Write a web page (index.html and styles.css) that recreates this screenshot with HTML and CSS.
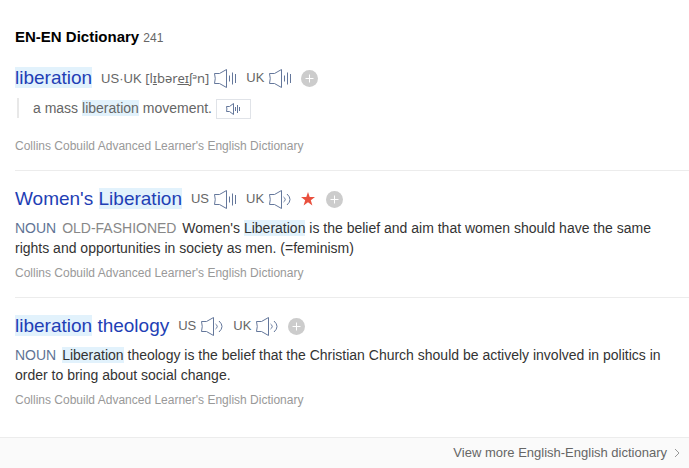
FILE: index.html
```html
<!DOCTYPE html>
<html lang="en">
<head>
<meta charset="utf-8">
<title>EN-EN Dictionary</title>
<link rel="stylesheet" href="styles.css">
</head>
<body>
<svg class="sprite" aria-hidden="true">
  <symbol id="speaker-bars" viewBox="0 0 24 22">
    <path d="M5.500 6.500h-5q1.500 5 0 10h5l7 4v-18z"/>
    <path d="M15.500 8.500v6M18.500 5.500v12M21.500 7v9"/>
  </symbol>
  <symbol id="speaker-waves" viewBox="0 0 24 22">
    <path d="M5.500 6.500h-5q1.500 5 0 10h5l7 4v-18z"/>
    <path d="M14.500 9q3.500 2.500 0 5M18 6q6 5.500 0 11"/>
  </symbol>
  <symbol id="speaker-small" viewBox="0 0 16 14">
    <path d="M4.500 4.500h-3q.8 2.500 0 5h3l4 3v-11z"/>
    <path d="M10.500 5v4M12.500 3v8M14.500 5v4"/>
  </symbol>
  <symbol id="plus" viewBox="0 0 17 17">
    <circle cx="8.500" cy="8.500" r="8.500"/>
    <path d="M8.500 4.500v8M4.500 8.500h8"/>
  </symbol>
</svg>
<main>
  <h1 class="heading">EN-EN Dictionary <span class="count">241</span></h1>

  <article class="entry">
    <div class="title-row">
      <h2 class="word"><a href="#"><mark>liberation</mark></a></h2>
      <span class="accent">US·UK <span class="ipa">[l<u>ɪ</u>bər<u>eɪ</u>ʃᵊn]</span></span>
      <button class="listen" aria-label="Listen, US"><svg><use href="#speaker-bars"/></svg></button>
      <span class="accent next">UK</span>
      <button class="listen" aria-label="Listen, UK"><svg><use href="#speaker-bars"/></svg></button>
      <button class="add" aria-label="Add"><svg><use href="#plus"/></svg></button>
    </div>
    <div class="example">
      <p>a mass <mark>liberation</mark> movement.</p>
      <button class="listen-small" aria-label="Listen to example"><svg><use href="#speaker-small"/></svg></button>
    </div>
    <p class="source">Collins Cobuild Advanced Learner's English Dictionary</p>
  </article>

  <article class="entry">
    <div class="title-row">
      <h2 class="word"><a href="#">Women's <mark>Liberation</mark></a></h2>
      <span class="accent">US</span>
      <button class="listen" aria-label="Listen, US"><svg><use href="#speaker-bars"/></svg></button>
      <span class="accent next">UK</span>
      <button class="listen" aria-label="Listen, UK"><svg><use href="#speaker-waves"/></svg></button>
      <svg class="star" viewBox="0 0 14 14" role="img" aria-label="Key word"><path d="M7 0l1.700 5H14L9.800 8.200l1.600 5.200L7 10.300l-4.400 3.100 1.600-5.200L0 5h5.300z"/></svg>
      <button class="add" aria-label="Add"><svg><use href="#plus"/></svg></button>
    </div>
    <p class="meaning"><span class="pos">NOUN</span> <span class="label">OLD-FASHIONED</span> Women's <mark>Liberation</mark> is the belief and aim that women should have the same rights and opportunities in society as men. (=feminism)</p>
    <p class="source">Collins Cobuild Advanced Learner's English Dictionary</p>
  </article>

  <article class="entry">
    <div class="title-row">
      <h2 class="word"><a href="#"><mark>liberation</mark> theology</a></h2>
      <span class="accent">US</span>
      <button class="listen" aria-label="Listen, US"><svg><use href="#speaker-waves"/></svg></button>
      <span class="accent next">UK</span>
      <button class="listen" aria-label="Listen, UK"><svg><use href="#speaker-waves"/></svg></button>
      <button class="add" aria-label="Add"><svg><use href="#plus"/></svg></button>
    </div>
    <p class="meaning"><span class="pos">NOUN</span> <mark>Liberation</mark> theology is the belief that the Christian Church should be actively involved in politics in order to bring about social change.</p>
    <p class="source">Collins Cobuild Advanced Learner's English Dictionary</p>
  </article>
</main>
<footer class="more">
  <a href="#">View more English-English dictionary
    <svg viewBox="0 0 6 10" aria-hidden="true"><path d="M1 1l4 4-4 4"/></svg></a>
</footer>
</body>
</html>
```
FILE: styles.css
```css
* { box-sizing: border-box; }
body {
  margin: 0;
  background: #fff;
  color: #333;
  font: 14px/20px "Liberation Sans", Arial, sans-serif;
}
h1, h2, p { margin: 0; }
a { color: inherit; text-decoration: none; }
button { padding: 0; border: 0; background: none; cursor: pointer; }
svg { display: block; fill: none; }
mark { background: #e2f2fc; color: inherit; }
.sprite { position: absolute; width: 0; height: 0; }

main { padding: 27px 0 13px 15px; }
.heading { color: #000; font-size: 15px; line-height: 20px; }
.count { color: #666; font-size: 12px; font-weight: 400; }

.entry { padding: 18px 0 16px; }
.entry + .entry { border-top: 1px solid #ececec; padding-top: 16px; }
.title-row { display: flex; align-items: center; height: 24px; }
.word { margin-right: 9px; color: #1f3fb5; font-size: 19px; font-weight: 400; line-height: 24px; }
.accent { margin-right: 5px; color: #666; font-size: 13px; white-space: nowrap; }
.next { margin-left: 8px; }
.ipa { font-family: "Noto Sans", "Open Sans", sans-serif; }
.listen svg { width: 24px; height: 22px; stroke: #64779b; }
.star { width: 14px; height: 14px; margin-left: 8px; fill: #e9503e; }
.add { margin-left: 8px; }
.star + .add { margin-left: 11px; }
.add svg { width: 17px; height: 17px; fill: #ccc; stroke: none; }
#plus path { stroke: #fff; }

.example { display: flex; align-items: flex-start; gap: 4px; margin-top: 8px; color: #666; }
.example p { padding-left: 14px; border-left: 2px solid #e8e8e8; margin-left: 2px; line-height: 20px; }
.listen-small { display: flex; align-items: center; justify-content: center; width: 35px; height: 20px; margin-top: 1px; border: 1px solid #e0e3e8; }
.listen-small svg { width: 16px; height: 14px; stroke: #64779b; }
.example + .source { margin-top: 19px; }

.meaning { margin-top: 7px; padding-right: 15px; }
.pos { margin-right: 2px; color: #5f7395; }
.label { margin-right: 2px; color: #888; }
.source { margin-top: 7px; color: #999; font-size: 12px; line-height: 16px; }

.more { display: flex; justify-content: flex-end; padding: 5px 9px 5px 15px; border-top: 1px solid #ececec; background: #fafafa; color: #666; font-size: 13px; }
.more a { display: flex; align-items: center; gap: 7px; }
.more svg { width: 6px; height: 10px; stroke: #999; }
```
